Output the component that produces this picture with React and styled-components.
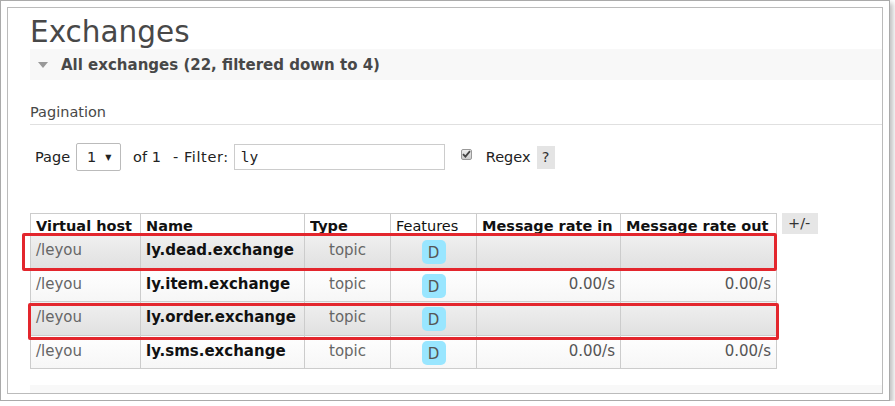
import React from 'react';
import styled, { createGlobalStyle } from 'styled-components';

const GlobalStyle = createGlobalStyle`
    body {
        margin: 0;
        background: #fff;
        font-family: "DejaVu Sans", Verdana, sans-serif;
        color: #484848;
    }
`;

//Screenshot frame
const Frame = styled.div`
    width: 890px;
    height: 401px;
    box-sizing: border-box;
    border: 1px solid #aaa;
    padding: 6px;
    box-shadow: 3px 3px 5px rgba(0, 0, 0, 0.25);
`;

const Panel = styled.div`
    height: 100%;
    box-sizing: border-box;
    border: 1px solid #bbb;
    padding-left: 22px;
    overflow: hidden;
    display: flex;
    flex-direction: column;
`;

const Title = styled.h1`
    margin: 0;
    padding-top: 7px;
    font-size: 29.5px;
    line-height: 34px;
    font-weight: normal;
    color: #484848;
`;

const SectionBar = styled.div`
    height: 31px;
    background: #f8f8f8;
    display: flex;
    align-items: center;
    padding-left: 8px;
    gap: 13px;
    flex-shrink: 0;
    h2 {
        margin: 0;
        font-size: 15px;
        font-weight: bold;
        color: #484848;
    }
`;

const Triangle = styled.span`
    width: 0;
    height: 0;
    border-left: 5px solid transparent;
    border-right: 5px solid transparent;
    border-top: 6px solid #999;
    margin-top: 1px;
`;

const SubTitle = styled.h3`
    margin: 23px 0 0 0;
    font-size: 14.5px;
    font-weight: normal;
    line-height: 19px;
    padding-bottom: 2px;
    border-bottom: 1px solid #e0e0e0;
    color: #484848;
`;

const Controls = styled.div`
    display: flex;
    align-items: center;
    margin-top: 18px;
    padding-left: 5px;
    font-size: 14.5px;
    color: #222;
    height: 28px;
`;

const Select = styled.div`
    width: 45px;
    height: 28px;
    box-sizing: border-box;
    border: 1px solid #bbb;
    border-radius: 2px;
    margin: 0 12px 0 6px;
    display: flex;
    align-items: center;
    padding-left: 10px;
    gap: 9px;
    span {
        font-size: 8px;
    }
`;

const Label = styled.span`
    margin-left: ${p => p.$gap || 0}px;
    letter-spacing: ${p => p.$spread || 0}px;
`;

const FilterInput = styled.div`
    width: 211px;
    height: 26px;
    box-sizing: border-box;
    border: 1px solid #ccc;
    margin-left: 5px;
    padding-left: 6px;
    font-family: "DejaVu Sans Mono", "Liberation Mono", monospace;
    font-size: 14.5px;
    line-height: 24px;
    color: #222;
`;

const Check = styled.span`
    width: 11px;
    height: 11px;
    box-sizing: border-box;
    border: 1px solid #999;
    border-radius: 2px;
    background: linear-gradient(#eee, #ccc);
    margin: -6px 14px 0 16px;
    display: flex;
    align-items: center;
    justify-content: center;
`;

const Help = styled.span`
    width: 18px;
    height: 23px;
    background: #e4e4e4;
    margin-left: 6px;
    display: flex;
    align-items: center;
    justify-content: center;
    color: #333;
`;

const TableRow = styled.div`
    display: flex;
    align-items: flex-start;
    gap: 5px;
    margin-top: 42px;
    flex-shrink: 0;
`;

const TableWrap = styled.div`
    position: relative;
`;

const Table = styled.table`
    border-collapse: collapse;
    font-size: 15px;
    table-layout: fixed;
    th, td {
        border: 1px solid #ccc;
        padding: 0 5px;
        white-space: nowrap;
        overflow: hidden;
    }
    th {
        text-align: left;
        color: #111;
        height: 20px;
        vertical-align: top;
        font-size: 14.5px;
    }
    td {
        height: 33.5px;
        vertical-align: top;
        padding-top: 6px;
        box-sizing: border-box;
        color: #666;
    }
`;

const HeadText = styled.div`
    height: 20px;
    overflow: hidden;
    line-height: 20px;
    padding-top: 2px;
    box-sizing: border-box;
    font-weight: ${p => (p.$plain ? 'normal' : 'bold')};
`;

const Row = styled.tr`
    background: ${p => (p.$marked
        ? 'linear-gradient(#f0f0f0, #e0e0e0)'
        : 'linear-gradient(#fff, #f6f6f6)')};
`;

const NameCell = styled.td`
    && {
        font-weight: bold;
        color: #111;
    }
`;

const CenterCell = styled.td`
    text-align: center;
`;

const RateCell = styled.td`
    && {
        text-align: right;
        color: #555;
    }
`;

const Badge = styled.span`
    display: inline-block;
    width: 24px;
    height: 24px;
    line-height: 26px;
    margin-top: -1px;
    border-radius: 5px;
    background: #99e6ff;
    color: #555;
    text-align: center;
`;

const Mark = styled.div`
    position: absolute;
    border: 3px solid #e3262d;
    border-radius: 2px;
    box-sizing: border-box;
    pointer-events: none;
`;

const Toggle = styled.span`
    background: #e6e6e6;
    color: #333;
    font-size: 14.5px;
    padding: 1px 8px 2px 6px;
    line-height: 18px;
`;

const NextBar = styled.div`
    height: 10px;
    background: #f8f8f8;
    margin-top: 16px;
    flex-shrink: 0;
`;

const exchanges = [
    { name: 'ly.dead.exchange', marked: true },
    { name: 'ly.item.exchange', rate: '0.00/s' },
    { name: 'ly.order.exchange', marked: true },
    { name: 'ly.sms.exchange', rate: '0.00/s' },
];

const App = () => {
    return (
        <>
            <GlobalStyle />
            <Frame>
                <Panel>
                    <Title>Exchanges</Title>
                    <SectionBar>
                        <Triangle />
                        <h2>All exchanges (22, filtered down to 4)</h2>
                    </SectionBar>
                    <SubTitle>Pagination</SubTitle>
                    <Controls>
                        Page
                        <Select>1 <span>▼</span></Select>
                        of 1
                        <Label $gap={12} $spread={0.6}>- Filter:</Label>
                        <FilterInput>ly</FilterInput>
                        <Check>
                            <svg width="9" height="8" viewBox="0 0 9 8">
                                <path d="M1 4.2 L3.4 6.6 L8 1.2" fill="none" stroke="#444" strokeWidth="1.8" />
                            </svg>
                        </Check>
                        Regex
                        <Help>?</Help>
                    </Controls>
                    <TableRow>
                        <TableWrap>
                            <Table>
                                <colgroup>
                                    <col style={{ width: 110 }} />
                                    <col style={{ width: 164 }} />
                                    <col style={{ width: 86 }} />
                                    <col style={{ width: 86 }} />
                                    <col style={{ width: 144 }} />
                                    <col style={{ width: 156 }} />
                                </colgroup>
                                <thead>
                                    <tr>
                                        <th><HeadText>Virtual host</HeadText></th>
                                        <th><HeadText>Name</HeadText></th>
                                        <th><HeadText>Type</HeadText></th>
                                        <th><HeadText $plain>Features</HeadText></th>
                                        <th><HeadText>Message rate in</HeadText></th>
                                        <th><HeadText>Message rate out</HeadText></th>
                                    </tr>
                                </thead>
                                <tbody>
                                    {exchanges.map(ex => (
                                        <Row key={ex.name} $marked={ex.marked}>
                                            <td>/leyou</td>
                                            <NameCell>{ex.name}</NameCell>
                                            <CenterCell>topic</CenterCell>
                                            <CenterCell><Badge>D</Badge></CenterCell>
                                            <RateCell>{ex.rate}</RateCell>
                                            <RateCell>{ex.rate}</RateCell>
                                        </Row>
                                    ))}
                                </tbody>
                            </Table>
                            <Mark style={{ left: -8, top: 20, width: 755, height: 38 }} />
                            <Mark style={{ left: -2, top: 90, width: 751, height: 37 }} />
                        </TableWrap>
                        <Toggle>+/-</Toggle>
                    </TableRow>
                    <NextBar />
                </Panel>
            </Frame>
        </>
    );
};

export default App;
